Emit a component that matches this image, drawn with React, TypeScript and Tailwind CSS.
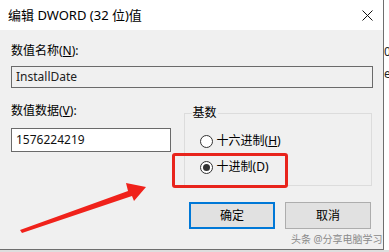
import React from "react";

const FONT = { fontFamily: '"Noto Sans", "Noto Sans CJK SC", sans-serif' };

function Radio({ checked, label, hotkey }: { checked?: boolean; label: string; hotkey: React.ReactNode }) {
  return (
    <div className="flex items-center gap-[4px] h-[16px]">
      <span className="w-[13px] h-[13px] rounded-full border border-[#333] bg-white flex items-center justify-center">
        {checked && <span className="w-[7px] h-[7px] rounded-full bg-[#333]" />}
      </span>
      <span className="text-[12px] leading-[16px] text-black">
        {label}({hotkey})
      </span>
    </div>
  );
}

export default function App() {
  return (
    <div className="relative w-[389px] h-[252px] overflow-hidden bg-[#dedede] select-none" style={FONT}>
      <div className="flex">
        {/* dialog */}
        <div className="w-[384px] h-[250px] flex flex-col border-r border-b border-[#6e6e6e] bg-[#f0f0f0]">
          <div className="h-[30px] bg-white flex items-center justify-between pl-[8px] pr-[10px] shrink-0">
            <span className="text-[13px] leading-[16px] text-black">编辑 DWORD (32 位)值</span>
            <svg width="11" height="11" viewBox="0 0 11 11">
              <path d="M0.5 0.5 L10.5 10.5 M10.5 0.5 L0.5 10.5" stroke="#111" strokeWidth="1" fill="none" />
            </svg>
          </div>

          <div className="flex flex-col px-[11px] pt-[13px]">
            <p className="text-[12px] leading-[16px] text-black">
              数值名称(<span className="underline">N</span>):
            </p>
            <div className="mt-[7px] w-[362px] h-[22px] border border-[#6a6a6a] bg-[#f0f0f0] flex items-center px-[4px] text-[12px] text-[#222]">
              InstallDate
            </div>

            <div className="mt-[15px] flex gap-[13px]">
              <div className="w-[160px] flex flex-col">
                <p className="text-[12px] leading-[16px] text-black">
                  数值数据(<span className="underline">V</span>):
                </p>
                <div className="mt-[9px] h-[24px] border border-[#6a6a6a] bg-white flex items-center px-[4px] text-[12px] text-[#111]">
                  1576224219
                </div>
              </div>

              <fieldset className="mt-[2px] w-[189px] border border-[#dcdcdc] pb-[10px]">
                <legend className="ml-[7px] px-[1px] text-[12px] leading-[16px] text-black">基数</legend>
                <div className="flex flex-col gap-[10px] pt-[12px] pl-[15px]">
                  <Radio label="十六进制" hotkey={<span className="underline">H</span>} />
                  <Radio checked label="十进制" hotkey="D" />
                </div>
              </fieldset>
            </div>

            <div className="mt-[16px] flex justify-end gap-[10px] pr-[1px]">
              <div className="w-[86px] h-[27px] border-2 border-[#0078d7] bg-[#e1e1e1] flex items-center justify-center text-[12px] text-black">
                确定
              </div>
              <div className="w-[86px] h-[27px] border border-[#adadad] bg-[#e1e1e1] flex items-center justify-center text-[12px] text-black">
                取消
              </div>
            </div>
          </div>
        </div>

        {/* window behind */}
        <div className="flex-1 h-[250px] bg-white flex flex-col pt-[44px] text-[12px] leading-[16px] text-[#222]">
          <span>0</span>
          <span className="mt-[6px]">e.</span>
        </div>
      </div>

      {/* annotations */}
      <div className="absolute left-[172px] top-[153px] w-[116px] h-[35px] border-[3px] border-[#e8241c] rounded-[3px]" />
      <svg className="absolute left-0 top-0" width="389" height="252" viewBox="0 0 389 252">
        <polygon
          points="20,230 128,191 126,183 146,187 134,201 132,196 22,233"
          fill="#f0221b"
        />
      </svg>
      <div className="absolute left-[291px] top-[233px] text-[10px] leading-[13px] text-[#8a8a8a] whitespace-nowrap">
        头条 @分享电脑学习
      </div>
    </div>
  );
}
